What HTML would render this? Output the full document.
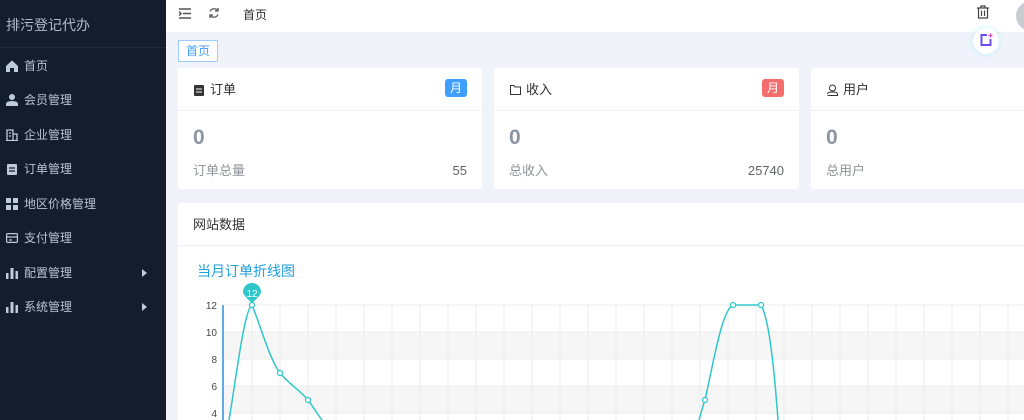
<!DOCTYPE html><html><head><meta charset="utf-8"><style>
*{margin:0;padding:0;box-sizing:border-box}
html{width:1024px;height:420px;overflow:hidden}
body{width:1024px;height:420px;overflow:hidden;background:#f0f3fa;font-family:"Liberation Sans","Noto Sans CJK SC",sans-serif;position:relative}
.side{position:absolute;left:0;top:0;width:166px;height:420px;background:#141d2d}
.logo{height:48px;line-height:50px;padding-left:6px;color:#b0bac8;font-size:14px;border-bottom:1px solid #1f2a3b}
.mi{position:absolute;left:0;width:166px;height:20px;color:#b8c3d1;font-size:12px;line-height:20px}
.mi .ic{position:absolute;left:6px;top:4px;width:12px;height:12px}
.mi span{position:absolute;left:24px}
.mi .ar{position:absolute;left:142px;top:6px;width:0;height:0;border-left:5px solid #bfcbd9;border-top:4px solid transparent;border-bottom:4px solid transparent}
.top{position:absolute;left:166px;top:0;right:0;height:32px;background:#fff}
.abs{position:absolute}
.card{position:absolute;top:68px;height:121px;background:#fff;border-radius:3px}
.card .h{height:43px;border-bottom:1px solid #eef0f3;font-size:13px;color:#303133;line-height:43px;padding-left:32px;position:relative}
.card .b{position:relative;height:78px}
.num{position:absolute;left:15px;top:15px;font-size:21px;font-weight:bold;color:#8c96a3}
.lab{position:absolute;left:15px;top:51px;font-size:13px;line-height:18px;color:#909399}
.val{position:absolute;right:15px;top:51px;font-size:13px;line-height:18px;color:#606266}
.tag{position:absolute;right:15px;top:11px;width:22px;height:18px;border-radius:3px;color:#fff;font-size:12px;line-height:18px;text-align:center}
</style></head><body>
<div class="side"><div class="logo">排污登记代办</div>
<div class="mi" style="top:56px"><svg class="ic" viewBox="0 0 12 12"><path d="M0 6L6 0.5 12 6V12H8V8H4V12H0Z" fill="#bfcbd9"/></svg><span>首页</span></div>
<div class="mi" style="top:90px"><svg class="ic" viewBox="0 0 12 12"><circle cx="6" cy="3" r="3" fill="#bfcbd9"/><path d="M0 12V10Q0 7 6 7 12 7 12 10V12Z" fill="#bfcbd9"/></svg><span>会员管理</span></div>
<div class="mi" style="top:125px"><svg class="ic" viewBox="0 0 12 12" fill="none" stroke="#bfcbd9" stroke-width="1.3"><path d="M1 12V1H7V12M7 5H11V12M0 11.5H12M3 4H5M3 7H5"/></svg><span>企业管理</span></div>
<div class="mi" style="top:159px"><svg class="ic" viewBox="0 0 12 12"><rect x="1" y="1" width="10" height="11" rx="1" fill="#bfcbd9"/><path d="M3 5H9M3 8H9" stroke="#141d2d" stroke-width="1.3"/></svg><span>订单管理</span></div>
<div class="mi" style="top:194px"><svg class="ic" viewBox="0 0 12 12" fill="#bfcbd9"><rect x="0" y="0" width="5" height="5"/><rect x="7" y="0" width="5" height="5"/><rect x="0" y="7" width="5" height="5"/><rect x="7" y="7" width="5" height="5"/></svg><span>地区价格管理</span></div>
<div class="mi" style="top:228px"><svg class="ic" viewBox="0 0 12 12" fill="none" stroke="#bfcbd9" stroke-width="1.2"><rect x="0.6" y="1.6" width="10.8" height="8.8" rx="1"/><path d="M1 5H11M3 8H6"/></svg><span>支付管理</span></div>
<div class="mi" style="top:263px"><svg class="ic" viewBox="0 0 12 12" fill="#bfcbd9"><rect x="0" y="6" width="2.5" height="6"/><rect x="4.5" y="1" width="3" height="11"/><rect x="9.5" y="4" width="2.5" height="8"/></svg><span>配置管理</span><i class="ar"></i></div>
<div class="mi" style="top:297px"><svg class="ic" viewBox="0 0 12 12" fill="#bfcbd9"><rect x="0" y="6" width="2.5" height="6"/><rect x="4.5" y="1" width="3" height="11"/><rect x="9.5" y="4" width="2.5" height="8"/></svg><span>系统管理</span><i class="ar"></i></div>
</div>
<div class="top">
<svg class="abs" style="left:13px;top:8px" width="12" height="11" viewBox="0 0 12 11" fill="none" stroke="#555" stroke-width="1.5"><path d="M0 1H12M4 5.5H12M0 10H12M0 3.5L2 5.5 0 7.5"/></svg>
<svg class="abs" style="left:42px;top:7px" width="12" height="12" viewBox="0 0 12 12" fill="none" stroke="#666" stroke-width="1.4"><path d="M10 4A4.5 4.5 0 0 0 2 4.5M2 8A4.5 4.5 0 0 0 10 7.5M10 1V4H7M2 11V8H5"/></svg>
<div class="abs" style="left:77px;top:6px;font-size:12px;color:#303133">首页</div>
<svg class="abs" style="left:811px;top:5px" width="12" height="14" viewBox="0 0 12 14" fill="none" stroke="#444" stroke-width="1.2"><path d="M0 3H12M4 3V1H8V3M1.5 3V13H10.5V3M4.5 5.5V11M7.5 5.5V11"/></svg>
<div class="abs" style="left:850px;top:1px;width:30px;height:30px;border-radius:50%;background:#c8ccd2"></div>
</div>
<div class="abs" style="left:178px;top:40px;width:40px;height:22px;border:1px solid #9fcbff;background:#fff;color:#409eff;font-size:12px;line-height:20px;text-align:center">首页</div>
<div class="abs" style="left:973px;top:28px;width:26px;height:26px;border-radius:50%;background:#fff;box-shadow:0 0 6px #b8f0f5"><svg style="position:absolute;left:6px;top:5px" width="14" height="14" viewBox="0 0 14 14" fill="none"><path d="M8 2H2.5V12H11.5V6" stroke="#6a4cf0" stroke-width="2"/><path d="M11.5 0.5V4.5M9.5 2.5H13.5" stroke="#e040e0" stroke-width="1.3"/></svg></div>
<div class="card" style="left:178px;width:304px"><div class="h"><svg style="position:absolute;left:16px;top:17px" width="10" height="11" viewBox="0 0 10 11"><rect width="10" height="11" rx="1" fill="#333"/><path d="M2 4H8M2 7H8" stroke="#fff"/></svg>订单<div class="tag" style="background:#409eff">月</div></div><div class="b"><div class="num">0</div><div class="lab">订单总量</div><div class="val">55</div></div></div>
<div class="card" style="left:494px;width:305px"><div class="h"><svg style="position:absolute;left:16px;top:17px" width="11" height="10" viewBox="0 0 11 10" fill="none" stroke="#333"><path d="M0.5 0.5H4L5 2H10.5V9.5H0.5Z"/></svg>收入<div class="tag" style="background:#f56c6c">月</div></div><div class="b"><div class="num">0</div><div class="lab">总收入</div><div class="val">25740</div></div></div>
<div class="card" style="left:811px;width:230px"><div class="h"><svg style="position:absolute;left:16px;top:16px" width="11" height="12" viewBox="0 0 11 12" fill="none" stroke="#333"><circle cx="5.5" cy="4" r="3"/><path d="M0.5 11.5H10.5V10Q10.5 8 5.5 8 0.5 8 0.5 10"/></svg>用户</div><div class="b"><div class="num">0</div><div class="lab">总用户</div></div></div>
<div class="abs" style="left:178px;top:203px;width:846px;height:217px;background:#fff;border-radius:3px 0 0 0">
<div style="height:43px;border-bottom:1px solid #eef0f3;padding-left:15px;line-height:43px;font-size:13px;color:#303133">网站数据</div>
<div style="position:absolute;left:19px;top:58px;font-size:14px;color:#1e9fe0">当月订单折线图</div>
</div>
<svg class="abs" style="left:0;top:0" width="1024" height="420">
<g fill="#f6f6f6"><rect x="224" y="332" width="800" height="27"/><rect x="224" y="386" width="800" height="27"/></g>
<g stroke="#ececec" stroke-width="1">
<path d="M224 305H1024M224 332H1024M224 359H1024M224 386H1024M224 413H1024"/>
<path d="M252 305V420M280 305V420M308 305V420M336 305V420M364 305V420M392 305V420M420 305V420M448 305V420M476 305V420M504 305V420M532 305V420M560 305V420M588 305V420M616 305V420M644 305V420M672 305V420M700 305V420M728 305V420M756 305V420M784 305V420M812 305V420M840 305V420M868 305V420M896 305V420M924 305V420M952 305V420M980 305V420M1008 305V420"/>
</g>
<path d="M223 305V420" stroke="#2a8fd8" stroke-width="1.5"/>
<g font-size="10" fill="#444" text-anchor="end" font-family="Liberation Sans"><text x="217" y="309">12</text><text x="217" y="336">10</text><text x="217" y="363">8</text><text x="217" y="390">6</text><text x="217" y="417">4</text></g>
<path d="M229 420C236 380 244 310 252 305C262 330 270 360 280 373C290 385 300 390 308 400C314 408 318 415 322 420M699 420C702 410 703 405 705 400C714 360 722 310 733 305L761 305C770 320 775 380 778 420" fill="none" stroke="#2ec7c9" stroke-width="1.5"/>
<g fill="#fff" stroke="#2ec7c9" stroke-width="1.2"><circle cx="252" cy="305" r="2.5"/><circle cx="280" cy="373" r="2.5"/><circle cx="308" cy="400" r="2.5"/><circle cx="705" cy="400" r="2.5"/><circle cx="733" cy="305" r="2.5"/><circle cx="761" cy="305" r="2.5"/></g>
<path d="M252 303C244 296 243 293 243 292A9 9 0 1 1 261 292C261 293 260 296 252 303Z" fill="#2ec7c9"/>
<text x="252" y="297" font-size="10" fill="#fff" text-anchor="middle" font-family="Liberation Sans">12</text>
</svg>
</body></html>
